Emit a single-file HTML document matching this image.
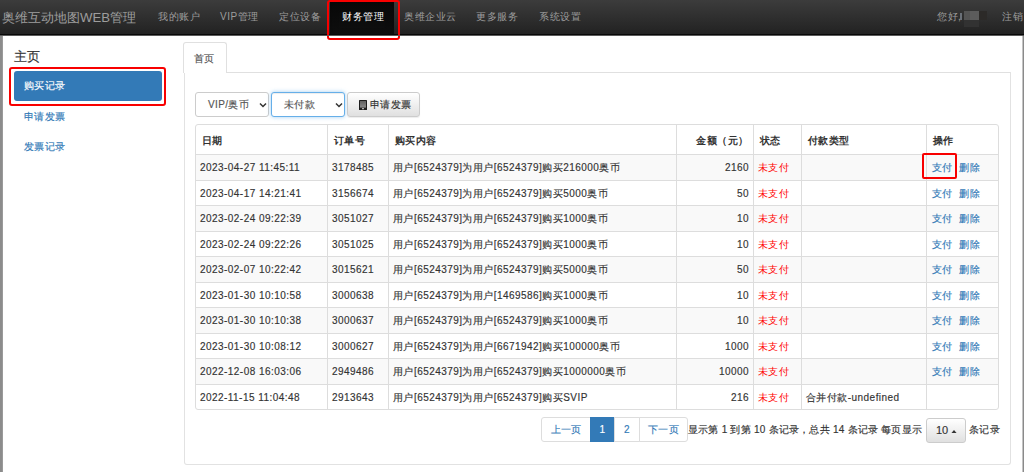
<!DOCTYPE html>
<html><head><meta charset="utf-8">
<style>
*{box-sizing:border-box;}
html,body{margin:0;padding:0;width:1024px;height:472px;overflow:hidden;background:#fff;}
body{-webkit-text-stroke:0.15px currentColor;font-family:"Liberation Sans",sans-serif;color:#333;font-size:10.8px;position:relative;}
.abs{position:absolute;}
#nav{-webkit-text-stroke:0;left:0;top:0;width:1024px;height:35px;background:linear-gradient(to bottom,#3c3c3c 0,#222 100%);border-bottom:1px solid #080808;}
#nav .t{position:absolute;top:10px;line-height:14px;font-size:10px;letter-spacing:0.5px;color:#9d9d9d;white-space:nowrap;}
#brand{position:absolute;left:2px;top:10px;font-size:13.2px;line-height:16px;color:#9d9d9d;white-space:nowrap;}
#active{position:absolute;left:330px;top:0;width:64px;height:34px;background:linear-gradient(to bottom,#080808 0,#0f0f0f 100%);box-shadow:inset 0 3px 9px rgba(0,0,0,.25);}
.redbox{position:absolute;border:2px solid #f80000;}
#lstrip{left:0;top:36px;width:3px;height:436px;background:linear-gradient(to right,#8c8c8c 0,#8c8c8c 66%,#9a9a9a 66%);}
#rstrip{left:1022px;top:36px;width:2px;height:436px;background:linear-gradient(to right,#c4c4c4 0,#c4c4c4 50%,#8a8a8a 50%);}
#side-h{left:14px;top:49px;font-size:13px;line-height:16px;color:#333;}
#pill{left:14px;top:71px;width:148px;height:29.5px;background:#337ab7;border-radius:3px;}
.side-t{position:absolute;left:24px;font-size:10px;letter-spacing:0.4px;line-height:14px;white-space:nowrap;}
#tab{left:183px;top:42px;width:44px;height:31px;border:1px solid #e0e0e0;border-bottom:none;border-radius:3px 3px 0 0;background:#fff;}
#tabline{left:183px;top:72px;width:827px;height:1px;background:#e0e0e0;}
#panel{left:183.5px;top:72px;width:827.5px;height:393px;border:1px solid #e2e2e2;border-top:none;border-radius:0 0 3px 3px;}
.sel{position:absolute;top:92px;height:25px;border:1px solid #ccc;border-radius:3px;background:#fff;}
.sel .t{position:absolute;top:5px;line-height:14px;font-size:10px;letter-spacing:0.4px;color:#555;white-space:nowrap;}
.chev{position:absolute;top:9px;width:8px;height:6px;}
#btn{left:347px;top:92px;width:73px;height:25px;border:1px solid #ccc;border-radius:3px;background:linear-gradient(to bottom,#fff 0,#e0e0e0 100%);box-shadow:inset 0 1px 0 rgba(255,255,255,.15),0 1px 1px rgba(0,0,0,.075);}
table{position:absolute;left:195px;top:124px;border-collapse:separate;border-spacing:0;table-layout:fixed;width:804px;border:1px solid #ddd;border-radius:3px;}
td,th{border-left:1px solid #ddd;border-top:1px solid #ddd;padding:2px 5px 0 4px;font-size:10px;letter-spacing:0.45px;white-space:nowrap;overflow:hidden;text-align:left;height:25.5px;line-height:14px;}
th{-webkit-text-stroke:0;height:29px;border-top:none;font-weight:bold;padding-left:5.5px;letter-spacing:0.6px;}
tr td:first-child,tr th:first-child{border-left:none;}
tbody tr:nth-child(odd) td{background:#f9f9f9;}
.op{padding-left:5px;}
.r{text-align:right;padding-right:4px;}
.red{color:#f00;-webkit-text-stroke:0;}
a{color:#337ab7;text-decoration:none;}
#pag{left:541px;top:417px;height:25px;}
.pg{position:absolute;top:417px;height:25px;border:1px solid #ddd;background:#fff;color:#337ab7;line-height:23px;text-align:center;font-size:10px;letter-spacing:0.3px;}
#info{left:688px;top:423px;font-size:10px;letter-spacing:0.23px;line-height:14px;white-space:nowrap;}
#per{left:926px;top:418px;width:40px;height:25px;border:1px solid #ccc;border-radius:3px;background:linear-gradient(to bottom,#fff 0,#e0e0e0 100%);}
</style></head><body>
<div id="nav" class="abs">
  <div id="brand">奥维互动地图WEB管理</div>
  <div class="t" style="left:158px">我的账户</div>
  <div class="t" style="left:220px">VIP管理</div>
  <div class="t" style="left:279px">定位设备</div>
  <div id="active"></div>
  <div class="t" style="left:342px;color:#fff">财务管理</div>
  <div class="t" style="left:404px">奥维企业云</div>
  <div class="t" style="left:476px">更多服务</div>
  <div class="t" style="left:539px">系统设置</div>
  <div class="t" style="left:937px">您好,</div>
  <div class="abs" style="left:964px;top:11px;width:6px;height:8.5px;background:#545454;"></div>
  <div class="abs" style="left:970px;top:11px;width:9px;height:8.5px;background:#5c5c5c;"></div>
  <div class="abs" style="left:964px;top:19.5px;width:15px;height:7px;background:#323232;"></div>
  <div class="abs" style="left:979px;top:11px;width:8px;height:9px;background:#2c2a28;"></div>
  <div class="abs" style="left:960px;top:13px;width:1.5px;height:7px;background:#6a7078;"></div>
  <div class="t" style="left:1002px">注销</div>
</div>
<div class="redbox" style="left:326.5px;top:0;width:73.5px;height:39.5px;border-radius:3px;"></div>
<div class="abs" style="left:0;top:35px;width:1024px;height:1px;background:#5a5a5a"></div>
<div id="lstrip" class="abs"></div>
<div id="rstrip" class="abs"></div>

<div id="side-h" class="abs">主页</div>
<div id="pill" class="abs"></div>
<div class="side-t" style="top:79px;color:#fff">购买记录</div>
<div class="redbox" style="left:9px;top:67px;width:157px;height:39px;border-radius:3px;"></div>
<div class="side-t" style="top:110px;color:#337ab7">申请发票</div>
<div class="side-t" style="top:140px;color:#337ab7">发票记录</div>

<div id="panel" class="abs"></div>
<div id="tabline" class="abs"></div>
<div id="tab" class="abs"></div>
<div class="abs" style="left:194px;top:51.5px;font-size:10px;letter-spacing:0.4px;line-height:14px;color:#555">首页</div>

<div class="sel" style="left:195px;width:74px;"><div class="t" style="left:12px">VIP/奥币</div>
<svg class="chev" style="left:63px" viewBox="0 0 8 6"><path d="M1 1.5L4 4.5L7 1.5" fill="none" stroke="#333" stroke-width="1.5"/></svg></div>
<div class="sel" style="left:271px;width:74px;border-color:#66afe9;box-shadow:inset 0 1px 1px rgba(0,0,0,.075),0 0 4px rgba(102,175,233,.6);"><div class="t" style="left:12px">未付款</div>
<svg class="chev" style="left:63px" viewBox="0 0 8 6"><path d="M1 1.5L4 4.5L7 1.5" fill="none" stroke="#333" stroke-width="1.5"/></svg></div>
<div id="btn" class="abs">
  <svg class="abs" style="left:11px;top:7px" width="8" height="10" viewBox="0 0 8 10"><rect x="0" y="0" width="8" height="10" rx="0.5" fill="#1e1e1e"/><defs><linearGradient id="sg" x1="0" y1="0" x2="0" y2="1"><stop offset="0" stop-color="#606060"/><stop offset="1" stop-color="#8a8a8a"/></linearGradient></defs><rect x="1" y="1" width="6" height="6.6" fill="url(#sg)"/><rect x="3" y="8.2" width="2" height="1" fill="#ddd"/></svg>
  <div class="abs" style="left:22px;top:5px;font-size:10px;letter-spacing:0.4px;line-height:14px;color:#333;white-space:nowrap">申请发票</div>
</div>

<table>
<colgroup><col style="width:131px"><col style="width:61px"><col style="width:288px"><col style="width:77px"><col style="width:48px"><col style="width:125px"><col style="width:72px"></colgroup>
<thead><tr><th>日期</th><th>订单号</th><th>购买内容</th><th class="r">金额（元）</th><th>状态</th><th>付款类型</th><th>操作</th></tr></thead>
<tbody>
<tr><td>2023-04-27 11:45:11</td><td>3178485</td><td>用户[6524379]为用户[6524379]购买216000奥币</td><td class="r">2160</td><td class="red">未支付</td><td></td><td class="op"><a>支付</a>&nbsp; <a>删除</a></td></tr>
<tr><td>2023-04-17 14:21:41</td><td>3156674</td><td>用户[6524379]为用户[6524379]购买5000奥币</td><td class="r">50</td><td class="red">未支付</td><td></td><td class="op"><a>支付</a>&nbsp; <a>删除</a></td></tr>
<tr><td>2023-02-24 09:22:39</td><td>3051027</td><td>用户[6524379]为用户[6524379]购买1000奥币</td><td class="r">10</td><td class="red">未支付</td><td></td><td class="op"><a>支付</a>&nbsp; <a>删除</a></td></tr>
<tr><td>2023-02-24 09:22:26</td><td>3051025</td><td>用户[6524379]为用户[6524379]购买1000奥币</td><td class="r">10</td><td class="red">未支付</td><td></td><td class="op"><a>支付</a>&nbsp; <a>删除</a></td></tr>
<tr><td>2023-02-07 10:22:42</td><td>3015621</td><td>用户[6524379]为用户[6524379]购买5000奥币</td><td class="r">50</td><td class="red">未支付</td><td></td><td class="op"><a>支付</a>&nbsp; <a>删除</a></td></tr>
<tr><td>2023-01-30 10:10:58</td><td>3000638</td><td>用户[6524379]为用户[1469586]购买1000奥币</td><td class="r">10</td><td class="red">未支付</td><td></td><td class="op"><a>支付</a>&nbsp; <a>删除</a></td></tr>
<tr><td>2023-01-30 10:10:38</td><td>3000637</td><td>用户[6524379]为用户[6524379]购买1000奥币</td><td class="r">10</td><td class="red">未支付</td><td></td><td class="op"><a>支付</a>&nbsp; <a>删除</a></td></tr>
<tr><td>2023-01-30 10:08:12</td><td>3000627</td><td>用户[6524379]为用户[6671942]购买100000奥币</td><td class="r">1000</td><td class="red">未支付</td><td></td><td class="op"><a>支付</a>&nbsp; <a>删除</a></td></tr>
<tr><td>2022-12-08 16:03:06</td><td>2949486</td><td>用户[6524379]为用户[6524379]购买1000000奥币</td><td class="r">10000</td><td class="red">未支付</td><td></td><td class="op"><a>支付</a>&nbsp; <a>删除</a></td></tr>
<tr><td>2022-11-15 11:04:48</td><td>2913643</td><td>用户[6524379]为用户[6524379]购买SVIP</td><td class="r">216</td><td class="red">未支付</td><td>合并付款-undefined</td><td></td></tr>
</tbody></table>
<div class="redbox" style="left:922px;top:153px;width:35px;height:26px;border-radius:2px;"></div>

<div class="pg" style="left:541px;width:50px;border-radius:3px 0 0 3px;">上一页</div>
<div class="pg" style="left:590px;width:25px;background:#337ab7;border-color:#337ab7;color:#fff;">1</div>
<div class="pg" style="left:614px;width:26px;">2</div>
<div class="pg" style="left:639px;width:49px;border-radius:0 3px 3px 0;">下一页</div>
<div id="info" class="abs">显示第 1 到第 10 条记录，总共 14 条记录 每页显示</div>
<div id="per" class="abs"><div class="abs" style="left:9px;top:4px;line-height:14px;font-size:11px">10</div>
<svg class="abs" style="left:23.5px;top:10.5px" width="6" height="3.5" viewBox="0 0 6 3.5"><path d="M0 3.5L3 0L6 3.5Z" fill="#333"/></svg></div>
<div class="abs" style="left:969px;top:423px;line-height:14px;font-size:10px;letter-spacing:0.4px;white-space:nowrap">条记录</div>
</body></html>
